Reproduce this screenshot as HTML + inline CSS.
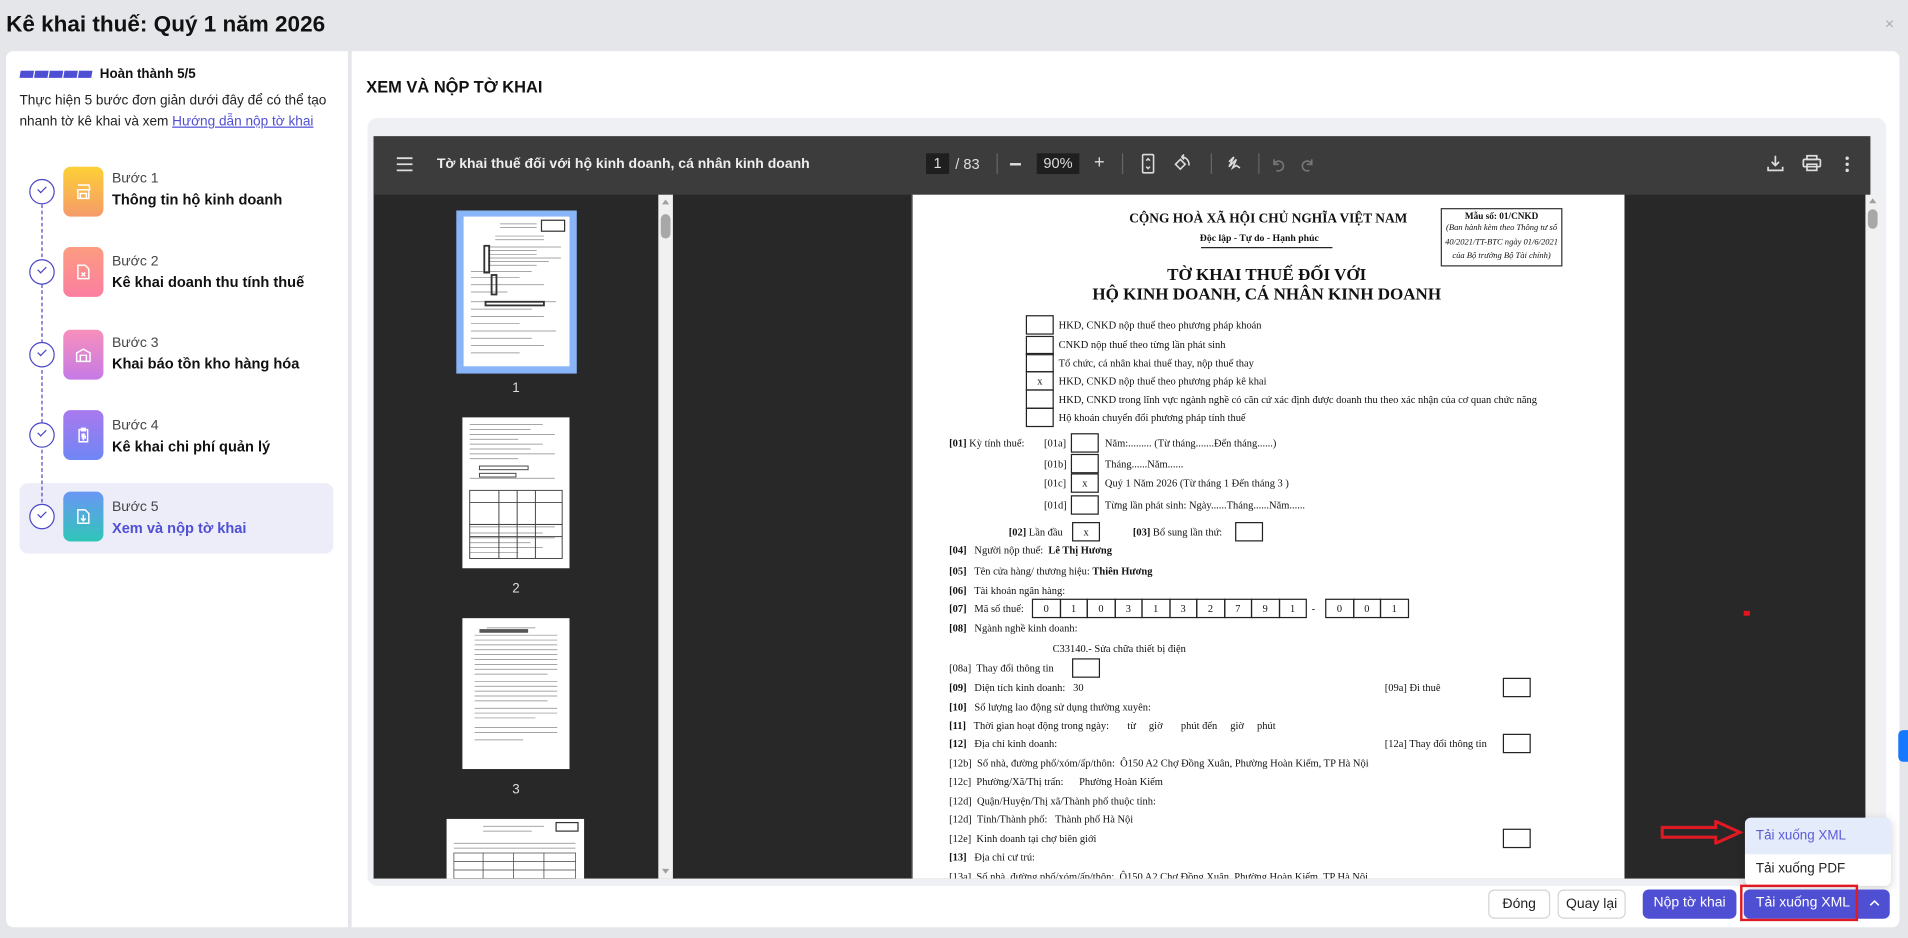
<!DOCTYPE html>
<html><head><meta charset="utf-8"><style>
*{box-sizing:border-box;margin:0;padding:0}
html,body{width:1908px;height:938px;overflow:hidden;background:#e4e6ea}
.s{position:absolute;left:0;top:0;width:1568px;height:771px;transform:scale(1.21684);transform-origin:0 0;font-family:"Liberation Sans","Noto Sans CJK SC",sans-serif;color:#111}
.a{position:absolute}
.t{position:absolute;font-family:"Liberation Serif",serif;font-size:8.6px;color:#111;white-space:nowrap;line-height:11px}
.b{font-weight:bold}
.bx{position:absolute;border:1px solid #222;height:16px;width:23px;font-family:"Liberation Serif",serif;font-size:8.5px;text-align:center;line-height:14px}
.ck{position:absolute;left:24px;width:21px;height:21px;border:1.3px solid #4b47c7;border-radius:50%;background:#fff}
.ck:after{content:"";position:absolute;left:6px;top:5px;width:6px;height:3px;border-left:1.6px solid #4b47c7;border-bottom:1.6px solid #4b47c7;transform:rotate(-45deg)}
.ic{position:absolute;left:52px;width:33px;height:41px;border-radius:6px}
.ic svg{position:absolute;left:10px;top:14px}
.sl{position:absolute;left:92px;font-size:11.5px;color:#444}
.st{position:absolute;left:92px;font-size:12px;font-weight:bold;color:#111}
.tb{position:absolute;color:#ddd;font-size:12px}
.btn{position:absolute;top:731px;height:24px;border-radius:5px;font-size:11.5px;line-height:22px;text-align:center}
.th{position:absolute;background:#fff}
.tn{position:absolute;color:#ddd;font-size:11px}
.mb{position:static;width:21px;margin-right:-1px}
</style></head><body><div class="s">
<div class="a" style="left:5px;top:9px;font-size:18.5px;font-weight:bold;color:#111">Kê khai thuế: Quý 1 năm 2026</div>
<div class="a" style="left:1549px;top:12px;font-size:13px;color:#aaa">×</div>

<div class="a" style="left:5px;top:42px;width:281px;height:720px;background:#fff;border-radius:6px 0 0 6px"></div>
<svg class="a" style="left:16px;top:58px" width="62" height="7"><g fill="#4f4fd4"><polygon points="1,0 12,0 11,6 0,6"/><polygon points="13,0 24,0 23,6 12,6"/><polygon points="25,0 36,0 35,6 24,6"/><polygon points="37,0 48,0 47,6 36,6"/><polygon points="49,0 60,0 59,6 48,6"/></g></svg>
<div class="a" style="left:82px;top:55px;font-size:11px;font-weight:bold">Hoàn thành 5/5</div>
<div class="a" style="left:16px;top:75px;font-size:11.2px;line-height:17px;color:#222;width:265px">Thực hiện 5 bước đơn giản dưới đây để có thể tạo nhanh tờ kê khai và xem <span style="color:#4f4fd4;text-decoration:underline">Hướng dẫn nộp tờ khai</span></div>
<div class="a" style="left:16px;top:397px;width:258px;height:58px;background:#ededfa;border-radius:7px"></div>
<div class="a" style="left:34px;top:168px;height:250px;border-left:1px dashed #4b47c7"></div>
<div class="ck" style="top:147px"></div><div class="ck" style="top:213px"></div><div class="ck" style="top:281px"></div><div class="ck" style="top:347px"></div><div class="ck" style="top:414px"></div>
<div class="ic" style="top:137px;background:linear-gradient(#fdd035,#f59b6a)"><svg width="13" height="13" fill="none" stroke="#fff" stroke-width="1.2"><path d="M1 5h11M2 5v7h9V5M2 1h9l1 4M4 12V8h5v4"/></svg></div>
<div class="ic" style="top:203px;background:linear-gradient(#fc9c80,#fb7ea0)"><svg width="13" height="13" fill="none" stroke="#fff" stroke-width="1.2"><path d="M2 1h6l3 3v8H2zM5 7l3 3M8 7l-3 3"/></svg></div>
<div class="ic" style="top:271px;background:linear-gradient(#f88fbb,#c67ae6)"><svg width="13" height="13" fill="none" stroke="#fff" stroke-width="1.2"><path d="M1 12V5l5.5-3L12 5v7zM4 12V7h5v5"/></svg></div>
<div class="ic" style="top:337px;background:linear-gradient(#a979ee,#6f86f5)"><svg width="13" height="13" fill="none" stroke="#fff" stroke-width="1.2"><path d="M3 2h7v10H3zM5 1h3v2H5zM6.5 5v6M8 6H5.5v1.5H8V9H5"/></svg></div>
<div class="ic" style="top:404px;background:linear-gradient(#6a96f5,#2fc6b8)"><svg width="13" height="13" fill="none" stroke="#fff" stroke-width="1.2"><path d="M2 1h6l3 3v8H2zM6.5 5v5M4.5 8l2 2 2-2"/></svg></div>
<div class="sl" style="top:141px">Bước 1</div><div class="st" style="top:157px">Thông tin hộ kinh doanh</div>
<div class="sl" style="top:209px">Bước 2</div><div class="st" style="top:225px">Kê khai doanh thu tính thuế</div>
<div class="sl" style="top:276px">Bước 3</div><div class="st" style="top:292px">Khai báo tồn kho hàng hóa</div>
<div class="sl" style="top:344px">Bước 4</div><div class="st" style="top:360px">Kê khai chi phí quản lý</div>
<div class="sl" style="top:411px">Bước 5</div><div class="st" style="top:427px;color:#4f4fd4">Xem và nộp tờ khai</div>

<div class="a" style="left:289px;top:42px;width:1272px;height:720px;background:#fff;border-radius:0 6px 6px 0"></div>
<div class="a" style="left:301px;top:64px;font-size:13.5px;font-weight:bold">XEM VÀ NỘP TỜ KHAI</div>
<div class="a" style="left:302px;top:97px;width:1248px;height:631px;background:#eef0f4;border-radius:8px"></div>
<div class="a" style="left:307px;top:112px;width:1230px;height:610px;background:#282828"></div>
<div class="a" style="left:307px;top:112px;width:1230px;height:48px;background:#3c3c3c"></div>
<svg class="a" style="left:326px;top:129px" width="14" height="12" stroke="#ddd" stroke-width="1.5"><path d="M0 1h13M0 6h13M0 11h13"/></svg>
<div class="tb" style="left:359px;top:129px;font-weight:bold;color:#eee;font-size:11.5px">Tờ khai thuế đối với hộ kinh doanh, cá nhân kinh doanh</div>
<div class="a" style="left:761px;top:126px;width:19px;height:17px;background:#1f1f1f;color:#ddd;font-size:12px;text-align:center;line-height:17px">1</div>
<div class="tb" style="left:785px;top:128px">/ 83</div>
<div class="a" style="left:819px;top:126px;width:1px;height:17px;background:#666"></div>
<div class="a" style="left:830px;top:134px;width:9px;height:1.6px;background:#ddd"></div>
<div class="a" style="left:852px;top:126px;width:35px;height:17px;background:#1f1f1f;color:#ddd;font-size:12px;text-align:center;line-height:17px">90%</div>
<div class="tb" style="left:899px;top:125px;font-size:15px">+</div>
<div class="a" style="left:922px;top:126px;width:1px;height:17px;background:#666"></div>
<svg class="a" style="left:938px;top:126px" width="12" height="17" fill="none" stroke="#ddd" stroke-width="1.3"><rect x="1" y="1" width="9" height="15" rx="1"/><path d="M4 6l1.5-1.5L7 6M4 11l1.5 1.5L7 11"/></svg>
<svg class="a" style="left:964px;top:126px" width="16" height="17" fill="none" stroke="#ddd" stroke-width="1.3"><path d="M6 5l-4 4 4 4 4-4z"/><path d="M7 3a6 6 0 0 1 6 7M7 3l2-2M7 3l2 2"/></svg>
<div class="a" style="left:995px;top:126px;width:1px;height:17px;background:#666"></div>
<svg class="a" style="left:1008px;top:127px" width="14" height="14" fill="none" stroke="#ddd" stroke-width="1.3"><path d="M2 6l4-4-4 8 6-6-3 7 3-2 3 2"/></svg>
<div class="a" style="left:1034px;top:126px;width:1px;height:17px;background:#666"></div>
<svg class="a" style="left:1044px;top:128px" width="40" height="14" fill="none" stroke="#777" stroke-width="1.3"><path d="M3 3v4h4M3 7a4 4 0 1 1 2 5M34 3v4h-4M34 7a4 4 0 1 0-2 5"/></svg>
<svg class="a" style="left:1452px;top:127px" width="14" height="14" fill="none" stroke="#ddd" stroke-width="1.4"><path d="M7 1v8M4 6l3 3 3-3M1 10v3h12v-3"/></svg>
<svg class="a" style="left:1481px;top:127px" width="16" height="14" fill="none" stroke="#ddd" stroke-width="1.4"><rect x="4" y="1" width="8" height="3"/><rect x="1" y="4" width="14" height="6" rx="1"/><rect x="4" y="8" width="8" height="5"/></svg>
<svg class="a" style="left:1516px;top:128px" width="4" height="14" fill="#ddd"><circle cx="2" cy="2" r="1.4"/><circle cx="2" cy="7" r="1.4"/><circle cx="2" cy="12" r="1.4"/></svg>
<div class="a" style="left:541px;top:160px;width:12px;height:562px;background:#f1f1f1"></div>
<div class="a" style="left:543px;top:176px;width:8px;height:20px;background:#a8a8a8;border-radius:4px"></div>
<div class="a" style="left:544px;top:164px;border:3px solid transparent;border-bottom:4px solid #a0a0a0;border-top:0"></div>
<div class="a" style="left:544px;top:714px;border:3px solid transparent;border-top:4px solid #a0a0a0;border-bottom:0"></div>
<div class="a" style="left:375px;top:173px;width:99px;height:134px;background:#8ab4f8"></div>
<div class="th" style="left:381px;top:178px;width:87px;height:123px"></div>
<div class="th" style="left:380px;top:343px;width:88px;height:124px"></div>
<div class="th" style="left:380px;top:508px;width:88px;height:124px"></div>
<div class="th" style="left:367px;top:673px;width:113px;height:49px"></div>
<svg class="a" style="left:381px;top:178px" width="87" height="123"><g stroke="#888" stroke-width=".6"><path d="M30 6h30M30 9h30M26 16h40M26 19h40M20 25h60M20 28h40M20 31h40M20 34h60M20 37h50M20 40h40M6 45h50M6 50h40M6 56h60M6 62h30M6 70h70M6 76h50M6 82h60M6 88h40M6 94h70M6 100h50M6 106h60M6 112h40"/></g><rect x="64" y="3" width="19" height="9" fill="none" stroke="#333"/><g fill="none" stroke="#333" stroke-width="1.5"><rect x="17" y="24" width="4" height="22"/><rect x="23" y="48" width="4" height="16"/><rect x="18" y="70" width="48" height="3"/></g></svg>
<svg class="a" style="left:380px;top:343px" width="88" height="124"><g stroke="#888" stroke-width=".6"><path d="M6 6h60M6 10h50M6 14h70M6 18h40M6 22h60M6 26h50M6 30h70M6 34h40M6 50h70M6 90h70M6 95h60M6 99h70M6 103h50M6 107h60M6 111h40"/></g><g fill="none" stroke="#444" stroke-width=".8"><rect x="14" y="40" width="40" height="3"/><rect x="14" y="46" width="30" height="3"/><rect x="6" y="60" width="76" height="28"/><rect x="6" y="88" width="76" height="28"/><path d="M30 60v56M45 60v56M60 60v56M6 70h76M6 98h76"/></g></svg>
<svg class="a" style="left:380px;top:508px" width="88" height="124"><g stroke="#888" stroke-width=".6"><path d="M20 8h40M10 14h68M10 18h68M10 22h68M10 26h68M10 30h68M10 34h68M10 38h68M10 42h68M10 46h60M10 52h68M10 56h68M10 60h68M10 64h68M10 68h60M10 74h68M10 78h68M10 82h50M10 90h68M10 94h68M10 100h40"/></g><rect x="14" y="9" width="40" height="3" fill="#555"/></svg>
<svg class="a" style="left:367px;top:673px" width="113" height="49"><g stroke="#888" stroke-width=".6"><path d="M30 6h50M30 10h40M6 20h100M6 24h100"/></g><rect x="90" y="3" width="18" height="7" fill="none" stroke="#333"/><g fill="none" stroke="#444" stroke-width=".6"><rect x="6" y="28" width="100" height="21"/><path d="M30 28v21M55 28v21M80 28v21M6 35h100M6 42h100"/></g></svg>
<div class="tn" style="left:421px;top:313px">1</div>
<div class="tn" style="left:421px;top:478px">2</div>
<div class="tn" style="left:421px;top:643px">3</div>
<div class="a" style="left:1533px;top:160px;width:12px;height:562px;background:#f1f1f1"></div>
<div class="a" style="left:1535px;top:172px;width:8px;height:16px;background:#a8a8a8;border-radius:4px"></div>
<div class="a" style="left:1536px;top:163px;border:3px solid transparent;border-bottom:4px solid #a0a0a0;border-top:0"></div>
<div class="a" style="left:1433px;top:502px;width:5px;height:4px;background:#e5141c"></div>
<div class="a" style="left:1560px;top:600px;width:8px;height:26px;background:#1677ff;border-radius:4px 0 0 4px"></div>

<div class="a" style="left:749px;top:160px;width:586px;height:562px;background:#fff;border-left:1px solid #444;overflow:hidden">
<div style="position:relative;left:-749px;top:-160px">
<div class="t b" style="left:927px;top:175px;font-size:11px">CỘNG HOÀ XÃ HỘI CHỦ NGHĨA VIỆT NAM</div>
<div class="t b" style="left:985px;top:190px;font-size:8px">Độc lập - Tự do - Hạnh phúc</div>
<div class="a" style="left:986px;top:203px;width:108px;height:1px;background:#222"></div>
<div class="a" style="left:1183px;top:171px;width:100px;height:48px;border:1.2px solid #333"></div>
<div class="t b" style="left:1183px;top:172px;font-size:7.6px;width:100px;text-align:center">Mẫu số: 01/CNKD</div>
<div class="t" style="left:1184px;top:182px;font-size:7px;font-style:italic;line-height:11.5px;text-align:center;width:98px;white-space:nowrap">(Ban hành kèm theo Thông tư số<br>40/2021/TT-BTC ngày 01/6/2021<br>của Bộ trưởng Bộ Tài chính)</div>
<div class="t b" style="left:900px;top:219px;font-size:14px;line-height:16px;text-align:center;width:280px">TỜ KHAI THUẾ ĐỐI VỚI</div>
<div class="t b" style="left:880px;top:235px;font-size:14px;line-height:16px;text-align:center;width:320px">HỘ KINH DOANH, CÁ NHÂN KINH DOANH</div>
<div class="bx" style="left:842px;top:259px"></div><div class="t" style="left:869px;top:262px">HKD, CNKD nộp thuế theo phương pháp khoán</div>
<div class="bx" style="left:842px;top:276px"></div><div class="t" style="left:869px;top:278px">CNKD nộp thuế theo từng lần phát sinh</div>
<div class="bx" style="left:842px;top:290px"></div><div class="t" style="left:869px;top:293px">Tổ chức, cá nhân khai thuế thay, nộp thuế thay</div>
<div class="bx" style="left:842px;top:305px">x</div><div class="t" style="left:869px;top:308px">HKD, CNKD nộp thuế theo phương pháp kê khai</div>
<div class="bx" style="left:842px;top:320px"></div><div class="t" style="left:869px;top:323px">HKD, CNKD trong lĩnh vực ngành nghề có căn cứ xác định được doanh thu theo xác nhận của cơ quan chức năng</div>
<div class="bx" style="left:842px;top:335px"></div><div class="t" style="left:869px;top:338px">Hộ khoán chuyển đổi phương pháp tính thuế</div>
<div class="t" style="left:779px;top:359px"><b>[01]</b> Kỳ tính thuế:</div>
<div class="t" style="left:857px;top:359px">[01a]</div><div class="bx" style="left:879px;top:356px"></div><div class="t" style="left:907px;top:359px">Năm:......... (Từ tháng.......Đến tháng......)</div>
<div class="t" style="left:857px;top:376px">[01b]</div><div class="bx" style="left:879px;top:373px"></div><div class="t" style="left:907px;top:376px">Tháng......Năm......</div>
<div class="t" style="left:857px;top:392px">[01c]</div><div class="bx" style="left:879px;top:389px">x</div><div class="t" style="left:907px;top:392px">Quý 1 Năm 2026 (Từ tháng 1 Đến tháng 3 )</div>
<div class="t" style="left:857px;top:410px">[01d]</div><div class="bx" style="left:879px;top:407px"></div><div class="t" style="left:907px;top:410px">Từng lần phát sinh: Ngày......Tháng......Năm......</div>
<div class="t" style="left:828px;top:432px"><b>[02]</b> Lần đầu</div><div class="bx" style="left:880px;top:429px">x</div>
<div class="t" style="left:930px;top:432px"><b>[03]</b> Bổ sung lần thứ:</div><div class="bx" style="left:1014px;top:429px"></div>
<div class="t" style="left:779px;top:447px"><b>[04]</b>&nbsp;&nbsp; Người nộp thuế:&nbsp; <b>Lê Thị Hương</b></div>
<div class="t" style="left:779px;top:464px"><b>[05]</b>&nbsp;&nbsp; Tên cửa hàng/ thương hiệu: <b>Thiên Hương</b></div>
<div class="t" style="left:779px;top:480px"><b>[06]</b>&nbsp;&nbsp; Tài khoản ngân hàng:</div>
<div class="t" style="left:779px;top:495px"><b>[07]</b>&nbsp;&nbsp; Mã số thuế:</div>
<div class="a" style="left:847px;top:492px;display:flex">
<div class="bx mb" style="width:23.5px">0</div><div class="bx mb" style="width:23.5px">1</div><div class="bx mb" style="width:23.5px">0</div><div class="bx mb" style="width:23.5px">3</div><div class="bx mb" style="width:23.5px">1</div><div class="bx mb" style="width:23.5px">3</div><div class="bx mb" style="width:23.5px">2</div><div class="bx mb" style="width:23.5px">7</div><div class="bx mb" style="width:23.5px">9</div><div class="bx mb" style="width:23.5px">1</div></div>
<div class="t" style="left:1077px;top:495px">-</div>
<div class="a" style="left:1088px;top:492px;display:flex"><div class="bx mb" style="width:23.5px">0</div><div class="bx mb" style="width:23.5px">0</div><div class="bx mb" style="width:23.5px">1</div></div>
<div class="t" style="left:779px;top:511px"><b>[08]</b>&nbsp;&nbsp; Ngành nghề kinh doanh:</div>
<div class="t" style="left:864px;top:528px">C33140.- Sửa chữa thiết bị điện</div>
<div class="t" style="left:779px;top:544px">[08a]&nbsp; Thay đổi thông tin</div><div class="bx" style="left:880px;top:541px"></div>
<div class="t" style="left:779px;top:560px"><b>[09]</b>&nbsp;&nbsp; Diện tích kinh doanh:&nbsp;&nbsp; 30</div>
<div class="t" style="left:1137px;top:560px">[09a] Đi thuê</div><div class="bx" style="left:1234px;top:557px"></div>
<div class="t" style="left:779px;top:576px"><b>[10]</b>&nbsp;&nbsp; Số lượng lao động sử dụng thường xuyên:</div>
<div class="t" style="left:779px;top:591px"><b>[11]</b>&nbsp;&nbsp; Thời gian hoạt động trong ngày:&nbsp;&nbsp;&nbsp;&nbsp;&nbsp;&nbsp; từ&nbsp;&nbsp;&nbsp;&nbsp; giờ&nbsp;&nbsp;&nbsp;&nbsp;&nbsp;&nbsp; phút đến&nbsp;&nbsp;&nbsp;&nbsp; giờ&nbsp;&nbsp;&nbsp;&nbsp; phút</div>
<div class="t" style="left:779px;top:606px"><b>[12]</b>&nbsp;&nbsp; Địa chỉ kinh doanh:</div>
<div class="t" style="left:1137px;top:606px">[12a] Thay đổi thông tin</div><div class="bx" style="left:1234px;top:603px"></div>
<div class="t" style="left:779px;top:622px">[12b]&nbsp; Số nhà, đường phố/xóm/ấp/thôn:&nbsp; Ô150 A2 Chợ Đồng Xuân, Phường Hoàn Kiếm, TP Hà Nội</div>
<div class="t" style="left:779px;top:637px">[12c]&nbsp; Phường/Xã/Thị trấn:&nbsp;&nbsp;&nbsp;&nbsp;&nbsp; Phường Hoàn Kiếm</div>
<div class="t" style="left:779px;top:653px">[12d]&nbsp; Quận/Huyện/Thị xã/Thành phố thuộc tỉnh:</div>
<div class="t" style="left:779px;top:668px">[12d]&nbsp; Tỉnh/Thành phố:&nbsp;&nbsp; Thành phố Hà Nội</div>
<div class="t" style="left:779px;top:684px">[12e]&nbsp; Kinh doanh tại chợ biên giới</div><div class="bx" style="left:1234px;top:681px"></div>
<div class="t" style="left:779px;top:699px"><b>[13]</b>&nbsp;&nbsp; Địa chỉ cư trú:</div>
<div class="t" style="left:779px;top:715px">[13a]&nbsp; Số nhà, đường phố/xóm/ấp/thôn:&nbsp; Ô150 A2 Chợ Đồng Xuân, Phường Hoàn Kiếm, TP Hà Nội</div>
</div></div>

<svg class="a" style="left:1364px;top:674px" width="70" height="20"><path d="M2 6h44V1l20 9-20 9v-5H2z" fill="none" stroke="#e01a22" stroke-width="2.5"/></svg>
<div class="a" style="left:1434px;top:672px;width:120px;height:56px;background:#fff;border-radius:5px;box-shadow:0 2px 8px rgba(0,0,0,.18);overflow:hidden">
<div style="height:30px;background:#e4ebfb;color:#5b5bd6;font-size:11px;line-height:30px;padding-left:9px">Tải xuống XML</div>
<div style="height:26px;color:#222;font-size:11px;line-height:24px;padding-left:9px">Tải xuống PDF</div></div>
<div class="btn" style="left:1223px;width:51px;border:1px solid #d4d4d8;background:#fff;color:#222">Đóng</div>
<div class="btn" style="left:1280px;width:56px;border:1px solid #d4d4d8;background:#fff;color:#222">Quay lại</div>
<div class="btn" style="left:1350px;width:77px;background:#4f4fd4;color:#fff">Nộp tờ khai</div>
<div class="btn" style="left:1433px;width:120px;background:#4f4fd4;color:#fff;text-align:left;padding-left:10px">Tải xuống XML</div>
<div class="a" style="left:1430px;top:727px;width:97px;height:30px;border:2.5px solid #e01a22"></div>
<svg class="a" style="left:1536px;top:739px" width="9" height="6" fill="none" stroke="#fff" stroke-width="1.3"><path d="M1 5l3.5-3.5L8 5"/></svg>
</div></body></html>
